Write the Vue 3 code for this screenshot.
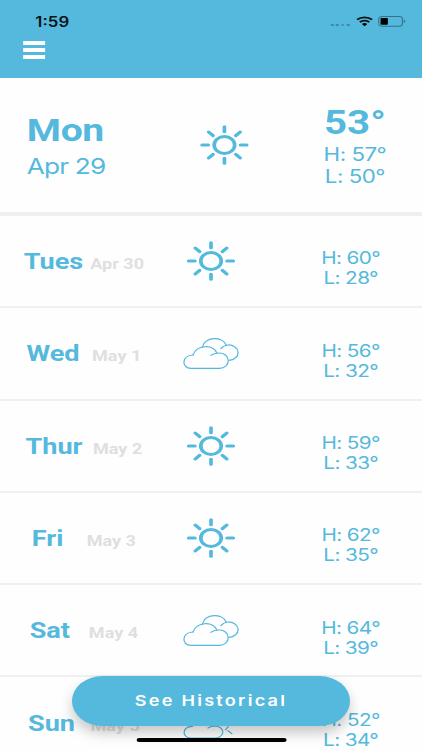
<script setup>
const today = { day: 'Mon', date: 'Apr 29', temp: 53, high: 57, low: 50 }

const days = [
  { day: 'Tues', date: 'Apr 30', icon: 'sun', high: 60, low: 28 },
  { day: 'Wed', date: 'May 1', icon: 'clouds', high: 56, low: 32 },
  { day: 'Thur', date: 'May 2', icon: 'sun', high: 59, low: 33 },
  { day: 'Fri', date: 'May 3', icon: 'sun', high: 62, low: 35 },
  { day: 'Sat', date: 'May 4', icon: 'clouds', high: 64, low: 39 },
  { day: 'Sun', date: 'May 5', icon: 'partly', high: 52, low: 34 }
]

const rays = [0, 45, 90, 135, 180, 225, 270, 315]
</script>

<template>
  <div class="viewport">
    <div class="phone">
      <header class="header">
        <div class="status">
          <span class="time">1:59</span>
          <div class="status-icons">
            <div class="signal"><i v-for="n in 4" :key="n"></i></div>
            <svg class="wifi" viewBox="0 0 16 12" preserveAspectRatio="none">
              <path d="M8 11.8 L5.4 9.2 A3.7 3.2 0 0 1 10.6 9.2 Z" />
              <path class="arc" d="M3.5 7 A6.2 5.6 0 0 1 12.5 7" />
              <path class="arc" d="M0.9 4.2 A9.9 8.6 0 0 1 15.1 4.2" />
            </svg>
            <svg class="battery" viewBox="0 0 23 11">
              <rect class="shell" x="0.5" y="0.5" width="19.4" height="9.8" rx="2.6" />
              <rect x="2" y="2" width="6" height="6.8" rx="0.8" />
              <path class="nub" d="M21 3.6 q1.2 0.5 1.2 1.8 t-1.2 1.8z" />
            </svg>
          </div>
        </div>
        <button class="menu" aria-label="Menu"><i></i><i></i><i></i></button>
      </header>

      <section class="today">
        <div class="today-day">
          <strong>{{ today.day }}</strong>
          <span>{{ today.date }}</span>
        </div>
        <svg class="sun" viewBox="-20 -20 40 40">
          <circle r="8.4" />
          <path v-for="r in rays" :key="r" d="M0 -13.2V-18.3" :transform="`rotate(${r})`" />
        </svg>
        <div class="today-temp">
          <strong>{{ today.temp }}°</strong>
          <span>H: {{ today.high }}°</span>
          <span>L: {{ today.low }}°</span>
        </div>
      </section>

      <section v-for="d in days" :key="d.day" class="row">
        <div class="name">
          <span class="day">{{ d.day }}</span>
          <span class="date">{{ d.date }}</span>
        </div>
        <div class="icon">
          <svg v-if="d.icon === 'sun'" class="sun" viewBox="-20 -20 40 40">
            <circle r="8.4" />
            <path v-for="r in rays" :key="r" d="M0 -13.2V-18.3" :transform="`rotate(${r})`" />
          </svg>
          <svg v-else-if="d.icon === 'clouds'" class="clouds" viewBox="40 336 168 96" preserveAspectRatio="none">
            <path d="M70 390C36 392 34 429 64 430H150A26 23 0 0 0 150 384Q134 384 124 391" />
            <path d="M70 390C82 359 128 357 142 384" />
            <path d="M98 367C106 335 158 332 170 361" />
            <path d="M154 371Q162 361 175 360A29 23 0 0 1 178 406" />
          </svg>
          <svg v-else class="clouds" viewBox="40 338 168 96" preserveAspectRatio="none">
            <path d="M68 396C36 398 36 430 64 431H133A24 18 0 0 0 138 395Q124 395 115 401" />
            <path d="M68 396C80 368 120 368 134 395" />
            <path d="M112 374A25 22 0 0 1 158 382" />
            <path d="M176 397L168 406M175 409L187 418M180 374H192M136 340V350" />
          </svg>
        </div>
        <div class="temps">
          <span>H: {{ d.high }}°</span>
          <span>L: {{ d.low }}°</span>
        </div>
      </section>

      <button class="historical">See Historical</button>
      <div class="home-bar"></div>
    </div>
  </div>
</template>

<style>
body {
  margin: 0;
  background: #fff;
}
</style>

<style scoped>
.viewport {
  width: 422px;
  height: 750px;
  overflow: hidden;
}

/* 346pt wide layout stretched to the full viewport width */
.phone {
  position: relative;
  width: 346px;
  height: 750px;
  overflow: hidden;
  transform: scaleX(1.2197);
  transform-origin: 0 0;
  background: #fefefe;
  color: #54b9dc;
  font-family: Inter, "Liberation Sans", sans-serif;
}

button {
  border: 0;
  padding: 0;
  font-family: inherit;
}

.header {
  box-sizing: border-box;
  height: 78px;
  padding: 13px 13px 0 18.5px;
  background: #54b9dc;
}

.status {
  display: flex;
  justify-content: space-between;
  height: 17px;
  padding-left: 10.5px;
  color: #0a1216;
}

.time {
  font-size: 13.8px;
  font-weight: 600;
  line-height: 19px;
}

.status-icons {
  display: flex;
  align-items: center;
}

.signal {
  display: flex;
  gap: 1.6px;
  margin: 7px 5px 0 0;
}

.signal i {
  width: 2.7px;
  height: 2.7px;
  border-radius: 50%;
  background: #3d8ba7;
}

.wifi {
  width: 13.8px;
  height: 10.5px;
  margin-right: 4.5px;
}

.wifi .arc {
  fill: none;
  stroke: #0a1216;
  stroke-width: 2.1;
}

.battery {
  width: 23px;
  height: 11px;
}

.battery .shell {
  fill: none;
  stroke: #33748b;
  stroke-width: 0.9;
}

.battery .nub {
  fill: #33748b;
}

.menu {
  display: flex;
  flex-direction: column;
  gap: 3px;
  margin-top: 11px;
  background: none;
}

.menu i {
  width: 18.5px;
  height: 4px;
  background: #fff;
}

.today {
  display: flex;
  box-sizing: border-box;
  height: 138px;
  border-bottom: 4px solid #efefef;
}

.today-day,
.today-temp {
  display: flex;
  flex-direction: column;
}

.today-day {
  width: 142px;
  padding: 32px 0 0 22px;
}

.today-day strong {
  font-family: Roboto, sans-serif;
  font-size: 32px;
  font-weight: 700;
  line-height: 40px;
  letter-spacing: -0.3px;
}

.today-day span {
  font-size: 21.5px;
  line-height: 32px;
  letter-spacing: -0.7px;
}

.today .sun {
  margin-top: 47px;
}

.today-temp {
  flex: 1;
  align-items: center;
  padding: 25px 0 0 32px;
}

.today-temp strong {
  font-family: Roboto, sans-serif;
  font-size: 33px;
  font-weight: 700;
  line-height: 40px;
}

.today-temp span {
  font-size: 18.3px;
  line-height: 22px;
  letter-spacing: -0.4px;
}

.sun {
  flex: none;
  width: 40px;
  height: 40px;
  fill: none;
  stroke: #54b9dc;
  stroke-width: 3;
  stroke-linecap: round;
}

.row {
  display: flex;
  align-items: center;
  box-sizing: border-box;
  height: 92.3px;
  border-bottom: 2px solid #f0f0f0;
}

.name {
  display: flex;
  justify-content: space-around;
  align-items: baseline;
  width: 104.4px;
  margin-left: 16.6px;
  font-family: Roboto, sans-serif;
  font-weight: 700;
}

.day {
  font-size: 22.2px;
}

.date {
  color: #e0dede;
  font-size: 14.8px;
}

.icon {
  display: flex;
  justify-content: center;
  width: 104px;
}

.clouds {
  width: 45.9px;
  height: 32px;
  fill: none;
  stroke: #54b9dc;
  stroke-width: 3.7;
  stroke-linecap: round;
}

.temps {
  display: flex;
  flex: 1;
  flex-direction: column;
  align-items: center;
  padding: 14.4px 0 0 4px;
  font-size: 17px;
  line-height: 20px;
  letter-spacing: -0.5px;
}

.historical {
  position: absolute;
  top: 676px;
  left: 59px;
  width: 228px;
  height: 49.5px;
  border-radius: 25px;
  background: #54b9dc;
  box-shadow: 0 7px 12px rgba(0, 0, 0, 0.22);
  color: #fff;
  font-size: 14.8px;
  font-weight: 600;
  letter-spacing: 1.85px;
}

.home-bar {
  position: absolute;
  top: 738px;
  left: 111.5px;
  width: 123.5px;
  height: 4.3px;
  border-radius: 3px;
  background: #000;
}
</style>
